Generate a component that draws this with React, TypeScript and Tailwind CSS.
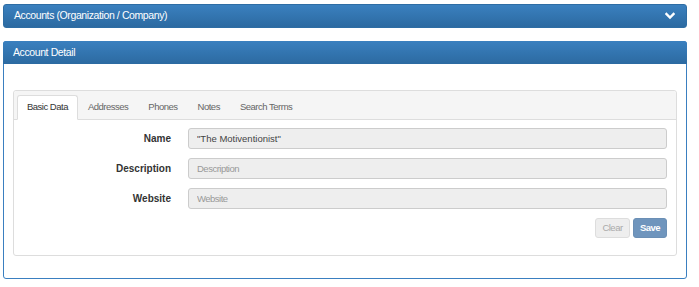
import React, { useState } from 'react';

const tabs = ['Basic Data', 'Addresses', 'Phones', 'Notes', 'Search Terms'];

const fields = [
  { label: 'Name', value: '"The Motiventionist"', placeholder: 'Name' },
  { label: 'Description', value: '', placeholder: 'Description' },
  { label: 'Website', value: '', placeholder: 'Website' },
];

const ChevronDown: React.FC = () => (
  <svg width="10" height="8" viewBox="0 0 10 8" fill="none">
    <path d="M1.5 2 L5 5.5 L8.5 2" stroke="white" strokeWidth="2.4" strokeLinecap="square" />
  </svg>
);

const App: React.FC = () => {
  const [active, setActive] = useState(0);

  const headerClasses = "flex items-center justify-between px-[10px] text-white text-[10.5px] tracking-[-0.4px] bg-gradient-to-b from-[#3a80bf] to-[#2c6aa1]";

  return (
    <div className="w-[699px] h-[287px] bg-white pt-[4px] px-[3px] font-['Liberation_Sans',Arial,sans-serif]">
      <div className={`${headerClasses} h-[24px] w-[684px] rounded-[3px] border border-[#2e6da4]`}>
        <span>Accounts (Organization / Company)</span>
        <span className="mr-[1px]"><ChevronDown /></span>
      </div>

      <div className="mt-[13px] w-[684px] h-[238px] rounded-[3px] border border-[#3a7fc0] flex flex-col">
        <div className={`${headerClasses} h-[23px] -mx-px -mt-px rounded-t-[3px]`}>
          <span>Account Detail</span>
        </div>

        <div className="mt-[26px] mx-[9px] h-[166px] border border-[#dddddd] rounded-[3px] flex flex-col">
          <div className="h-[29px] bg-[#f5f5f5] border-b border-[#dddddd] flex items-end pl-[3px] rounded-t-[3px]">
            {tabs.map((t, i) => (
              <button
                key={t}
                onClick={() => setActive(i)}
                className={
                  i === active
                    ? "h-[25px] -mb-px px-[9px] text-[9.5px] tracking-[-0.5px] text-[#333] bg-white border border-[#dddddd] border-b-white rounded-t-[3px]"
                    : "h-[24px] px-[10px] text-[9.5px] tracking-[-0.5px] text-[#666]"
                }
              >
                {t}
              </button>
            ))}
          </div>

          <div className="flex flex-col gap-[9px] pt-[8px] pl-[10px] pr-[9px]">
            {fields.map((f) => (
              <div key={f.label} className="flex items-center">
                <label className="w-[147px] text-right text-[10px] font-bold text-[#333]">{f.label}</label>
                <input
                  readOnly
                  value={f.value}
                  placeholder={f.placeholder}
                  className="ml-[17px] h-[21px] flex-1 rounded-[3px] border border-[#cccccc] bg-[#eeeeee] px-[8px] text-[9.5px] text-[#444] placeholder:text-[#999] placeholder:tracking-[-0.5px] outline-none"
                />
              </div>
            ))}
            <div className="flex justify-end gap-[3px]">
              <button className="h-[20px] w-[35px] rounded-[3px] border border-[#dddddd] bg-[#eeeeee] text-[9.5px] tracking-[-0.5px] text-[#aaa]">Clear</button>
              <button className="h-[20px] w-[34px] rounded-[3px] border border-[#6b8fb5] bg-[#6f95bd] text-[9.5px] tracking-[-0.5px] font-bold text-white">Save</button>
            </div>
          </div>
        </div>
      </div>
    </div>
  );
};

export default App;
